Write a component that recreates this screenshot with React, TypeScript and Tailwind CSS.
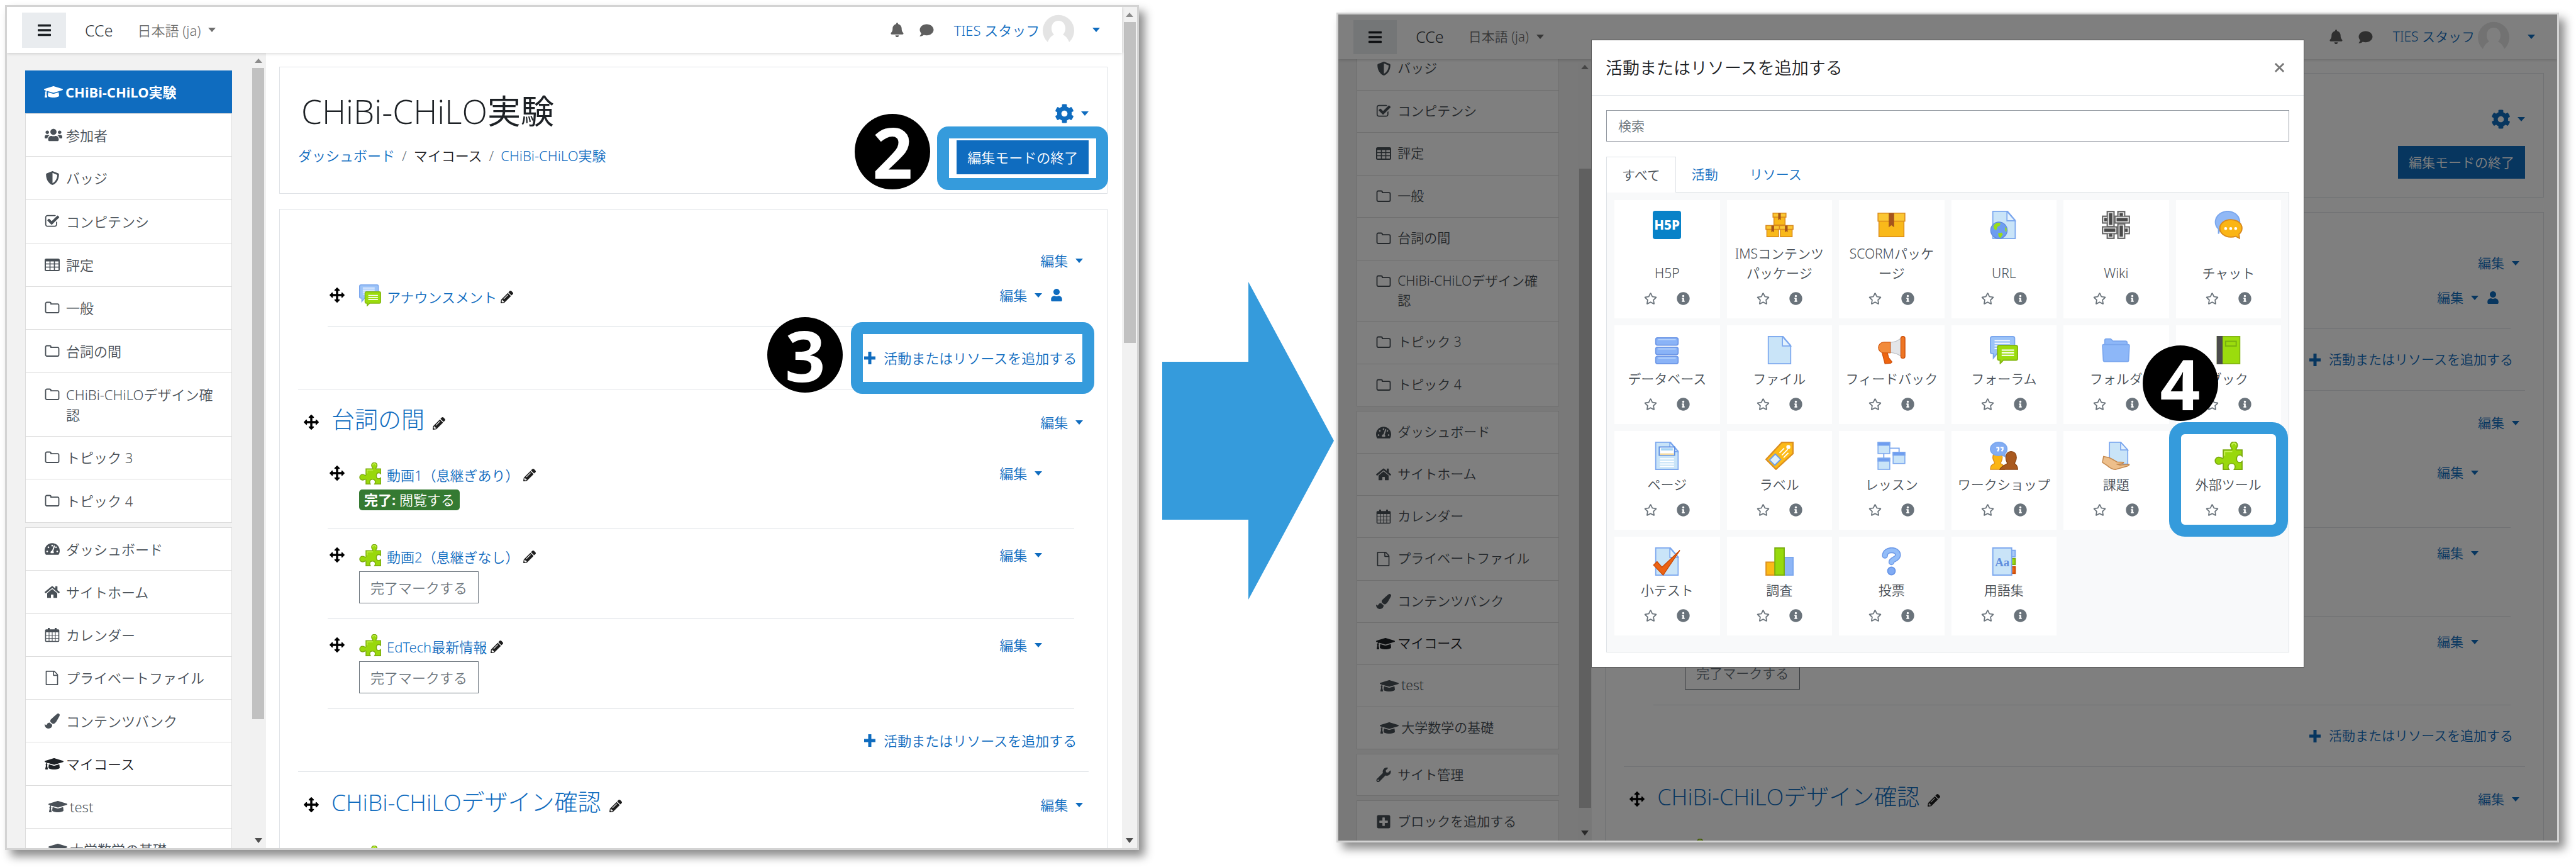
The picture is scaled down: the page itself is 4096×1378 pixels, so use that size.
import type { ReactNode } from "react";
import {
  FaBars,
  FaBell,
  FaCog,
  FaComment,
  FaGraduationCap,
  FaHome,
  FaInfoCircle,
  FaPaintBrush,
  FaPencilAlt,
  FaPlusSquare,
  FaRegStar,
  FaShieldAlt,
  FaTachometerAlt,
  FaUser,
  FaUsers,
  FaWrench,
} from "react-icons/fa";

/* ---------- size sets for the two browser windows ---------- */

const large = {
  text: "text-[22px] leading-8",
  header: "h-[73px]",
  menu: "h-14 w-[70px]",
  drawer: "w-[412px]",
  drawerPad: "pt-7",
  item: "w-[329px]",
  main: "pr-[23px]",
  headCard: "h-[202px] mb-6",
  headTop: "pt-[38px]",
  gearTop: "pt-[58px]",
  title: "text-[53px] leading-[64px]",
  button: "h-[54px]",
  firstHead: "h-[95px] pt-[68px]",
  sectionHead: "h-[92px] pt-[13px]",
  sectionTitle: "text-[37px]",
  activity: "pt-[25px]",
  below: "mt-[10px]",
  add: "h-[100px]",
};

const small: typeof large = {
  text: "text-[21px] leading-[31px]",
  header: "h-[71px]",
  menu: "h-[54px] w-[69px]",
  drawer: "w-[403px]",
  drawerPad: "-mt-[19px]",
  item: "w-[322px]",
  main: "pr-[21px]",
  headCard: "h-[198px] mb-[23px]",
  headTop: "pt-[37px]",
  gearTop: "pt-[57px]",
  title: "text-[52px] leading-[62px]",
  button: "h-[52px]",
  firstHead: "h-[95px] pt-[67px]",
  sectionHead: "h-[90px] pt-[12px]",
  sectionTitle: "text-[36px]",
  activity: "pt-[24px]",
  below: "mt-[9px]",
  add: "h-[98px]",
};

type Sizes = typeof large;

/* ---------- small glyphs ---------- */

const Caret = () => (
  <span className="inline-block h-0 w-0 border-x-[6px] border-t-[7px] border-x-transparent border-t-current" />
);

const CheckIcon = () => (
  <svg viewBox="0 0 1792 1792" className="h-6 w-6" fill="currentColor">
    <path d="M1472 930v318q0 119-84.5 203.5t-203.5 84.5h-832q-119 0-203.5-84.5t-84.5-203.5v-832q0-119 84.5-203.5t203.5-84.5h832q63 0 117 25 15 7 18 23 3 17-9 29l-49 49q-10 10-23 10-3 0-9-2-23-6-45-6h-832q-66 0-113 47t-47 113v832q0 66 47 113t113 47h832q66 0 113-47t47-113v-254q0-13 9-22l64-64q10-10 23-10 6 0 12 3 20 8 20 29zm231-489l-814 814q-24 24-57 24t-57-24l-430-430q-24-24-24-57t24-57l110-110q24-24 57-24t57 24l263 263 647-647q24-24 57-24t57 24l110 110q24 24 24 57t-24 57z" />
  </svg>
);

const TableIcon = () => (
  <svg viewBox="0 0 24 20" className="h-5 w-6" fill="none" stroke="currentColor">
    <rect x="1" y="1" width="22" height="18" rx="1.5" strokeWidth="2" />
    <path d="M1 3h22" strokeWidth="3" />
    <path d="M1 8.5h22M1 13.5h22M8.5 3v16M15.5 3v16" strokeWidth="1.6" />
  </svg>
);

const FolderIcon = () => (
  <svg viewBox="0 0 24 20" className="h-5 w-6" fill="none" stroke="currentColor" strokeWidth="1.8">
    <path d="M1.5 3.5a2 2 0 0 1 2-2H8a2 2 0 0 1 2 2v.7h10.500a2 2 0 0 1 2 2V16a2 2 0 0 1-2 2h-17a2 2 0 0 1-2-2z" />
  </svg>
);

const FileIcon = () => (
  <svg viewBox="0 0 1792 1792" className="h-[23px] w-[23px]" fill="currentColor">
    <path d="M1596 380q28 28 48 76t20 88v1152q0 40-28 68t-68 28h-1344q-40 0-68-28t-28-68v-1600q0-40 28-68t68-28h896q40 0 88 20t76 48zm-444-244v376h376q-10-29-22-41l-313-313q-12-12-41-22zm384 1528v-1024h-416q-40 0-68-28t-28-68v-416h-768v1536h1280z" />
  </svg>
);

const CalendarIcon = () => (
  <svg viewBox="0 0 24 24" className="h-6 w-6" fill="none" stroke="currentColor">
    <rect x="1.500" y="4" width="21" height="18.500" rx="1" strokeWidth="1.600" />
    <path d="M1.500 6h21" strokeWidth="4" />
    <path d="M6.500 1v5M17.500 1v5" strokeWidth="3" />
    <path d="M2 12.500h20M2 17.500h20M7 8v14M12 8v14M17 8v14" strokeWidth="1.100" />
  </svg>
);

const ArrowsIcon = () => (
  <svg viewBox="0 0 1792 1792" className="h-6 w-6" fill="currentColor">
    <path d="M1792 896q0 26-19 45l-256 256q-19 19-45 19t-45-19-19-45v-128h-384v384h128q26 0 45 19t19 45-19 45l-256 256q-19 19-45 19t-45-19l-256-256q-19-19-19-45t19-45 45-19h128v-384h-384v128q0 26-19 45t-45 19-45-19l-256-256q-19-19-19-45t19-45l256-256q19-19 45-19t45 19 19 45v128h384v-384h-128q-26 0-45-19t-19-45 19-45l256-256q19-19 45-19t45 19l256 256q19 19 19 45t-19 45-45 19h-128v384h384v-128q0-26 19-45t45-19 45 19l256 256q19 19 19 45z" />
  </svg>
);

const PlusIcon = () => (
  <svg viewBox="0 0 18 20" className="h-5 w-[18px]" stroke="currentColor" strokeWidth="5">
    <path d="M9 0v20M0 10h18" />
  </svg>
);

/* ---------- coloured activity icons, all on a 24 unit grid ---------- */

const blue = "#7ba7ee";

const Sheet = ({ x = 2.5 }: { x?: number }) => (
  <g stroke={blue} strokeWidth="0.9">
    <path d={`M${x} .5h12.500l6.500 7.500v15.500h-19z`} fill="#c9e4f8" />
    <path d={`M${x + 12} .5v8h7z`} fill="#e4f2fd" />
  </g>
);

const Box = ({ x, y, w, h }: { x: number; y: number; w: number; h: number }) => (
  <g stroke="#d98a1c" strokeWidth="0.8">
    <rect x={x + 0.8} y={y + 1} width={w - 1.6} height={h - 1} fill="#f9b91a" />
    <rect x={x} y={y} width={w} height={h * 0.34} fill="#fbc733" />
    <path
      d={`M${x + w * 0.4} ${y}h${w * 0.2}v${h * 0.6}l-${w * 0.1}-${h * 0.09}l-${w * 0.1} ${h * 0.09}z`}
      fill="#a5551d"
      stroke="none"
    />
  </g>
);

const Puzzle = () => (
  <g>
    <path
      d="M7.500 7h6.700c.7 0 1-.6.5-1.300C14 4.700 13.600 3.900 13.600 3a3 2.800 0 0 1 6 0c0 .9-.3 1.700-1 2.700-.5.700-.2 1.300.5 1.300h4.400v5.200c-.6-.6-1.300-.9-2-.9-1.600 0-2.700 1.400-2.700 3.200s1.100 3.200 2.700 3.200c.7 0 1.400-.3 2-.9v6.700h-6.600c.5-.7.700-1.400.7-2.200 0-1.700-1.300-2.900-3-2.900s-3 1.200-3 2.900c0 .8.200 1.500.7 2.200H7.500v-4.600c0-.7-.6-.9-1.300-.5-.8.500-1.600.8-2.500.8a3 3 0 0 1 0-6.100c.9 0 1.700.3 2.500.8.7.4 1.300.2 1.300-.5z"
      fill="#99d80c"
      stroke="#79a80d"
      strokeWidth="0.9"
    />
    <path d="M8.700 12V8.300h6.500M14.900 3a1.700 1.700 0 0 1 3.400 0" fill="none" stroke="#c8f257" strokeWidth="0.9" />
  </g>
);

const Forum = () => (
  <g>
    <path d="M2 .5h17.500a1.500 1.500 0 0 1 1.500 1.500v12.500H6.500L3 18.700V15H2A1.500 1.500 0 0 1 .5 13.500V2A1.500 1.500 0 0 1 2 .5z" fill="#9cc3f8" stroke={blue} />
    <path d="M4 4h13M4 6.200h13M4 8.400h13M4 10.600h3" stroke="#fff" strokeWidth="0.9" />
    <path d="M8 8h14a1.500 1.500 0 0 1 1.500 1.500v9.500a1.500 1.500 0 0 1-1.500 1.500H11.500L8.800 23.300V20.500H8A1.500 1.500 0 0 1 6.500 19V9.500A1.500 1.500 0 0 1 8 8z" fill="#9bdc0d" stroke="#85b814" />
    <path d="M10 12h10.500M10 14.200h10.500M10 16.400h10.500" stroke="#fff" strokeWidth="1.100" />
  </g>
);

const Pane = ({ x, y }: { x: number; y: number }) => (
  <g stroke={blue} strokeWidth="0.8">
    <rect x={x} y={y} width="10" height="9.500" fill="#c9e4f8" />
    <rect x={x} y={y} width="10" height="2.500" fill="#6e9df0" />
  </g>
);

const drawings: Record<string, ReactNode> = {
  H5P: (
    <g>
      <rect width="24" height="24" rx="2" fill="#0882c8" />
      <text x="12" y="16" textAnchor="middle" fontSize="11" fontWeight="800" fill="#fff">
        H5P
      </text>
    </g>
  ),
  IMS: (
    <g>
      <Box x={6.5} y={2} w={11} h={10} />
      <Box x={0.5} y={12.5} w={11.5} h={9.5} />
      <Box x={12} y={12.5} w={11.5} h={9.5} />
    </g>
  ),
  SCORM: <Box x={0.6} y={2} w={22.8} h={20} />,
  URL: (
    <g>
      <Sheet />
      <circle cx="7.700" cy="16.500" r="7" fill="#6d9df0" stroke="#5f89dc" strokeWidth="0.7" />
      <path d="M3 13c1-2.500 4-3.500 6-2.500l-.5 2-2 1-1 3-2-1zM7 19l3-.5 1 1.500-2 3-1.500-1zM13 13.500l1.300 1.500-.3 3-1-1z" fill="#99dd17" />
    </g>
  ),
  Wiki: (
    <g fill="#4a4a4a" stroke="#6b6b6b" strokeWidth="0.9">
      <rect x="13.500" y=".5" width="6" height="8" />
      <rect x=".5" y="4.500" width="8" height="6" />
      <rect x="4.500" y="16" width="6" height="7.500" />
      <rect x="16" y="13.500" width="7.500" height="6" />
      <rect x="4.500" y=".5" width="6" height="13" />
      <rect x="11" y="4.500" width="12.500" height="6" />
      <rect x="13.500" y="11" width="6" height="12.500" />
      <rect x=".5" y="13.500" width="12.500" height="6" />
      <g fill="none" stroke="#e8e8e8" strokeWidth="0.9">
        <rect x="5.600" y="1.600" width="3.800" height="10.800" />
        <rect x="12.100" y="5.600" width="10.300" height="3.800" />
        <rect x="14.600" y="12.100" width="3.800" height="10.300" />
        <rect x="1.600" y="14.600" width="10.300" height="3.800" />
        <path d="M14.600 4.500V1.600h3.800v2.900M4.500 5.600H1.600v3.800h2.900M5.600 19.500v2.900h3.800v-2.900M19.500 14.600h2.900v3.800h-2.900" />
      </g>
    </g>
  ),
  Chat: (
    <g>
      <path d="M3.500 19.500v-4A10.300 9 0 1 1 11 18.500c-3 0-5-.7-6.500-2z" fill="#90b8f6" stroke={blue} />
      <path d="M14 7.500c5.200 0 9.400 3.200 9.400 7.300 0 2-.9 3.700-2.500 5l.4 3.500-3.200-1.600c-1.200.4-2.600.6-4.100.6-5.200 0-9.400-3.300-9.400-7.500S8.800 7.500 14 7.500z" fill="#fbb515" stroke="#d98a1c" />
      <path d="M9.500 15h.1M13.800 15h.1M18 15h.1" stroke="#fff" strokeWidth="2.400" strokeLinecap="round" />
    </g>
  ),
  Database: (
    <g fill="#8ab3f7" stroke="#6c96e6" strokeWidth="0.9">
      <rect x="2.500" y="1.500" width="19" height="6.300" rx="1.500" />
      <rect x="2.500" y="9.500" width="19" height="6.300" rx="1.500" />
      <rect x="2.500" y="17.200" width="19" height="6.300" rx="1.500" />
      <path d="M4.500 3h15M4.500 11h15M4.500 18.700h15" stroke="#b4d2fb" />
    </g>
  ),
  File: <Sheet />,
  Feedback: (
    <g>
      <path d="M11 5.500c4-.3 7-1.700 9.500-4v16c-2.500-2-5.500-3.200-9.500-3.500z" fill="#e3e5e8" stroke="#b9bdc2" strokeWidth="0.6" />
      <path d="M4 14h4.500l1.200 4.500L12.500 22l-1 1-5 .5z" fill="#ee6510" stroke="#cb4c07" strokeWidth="0.6" />
      <path d="M11 5.300H5.500a4.500 4.500 0 0 0 0 9H11z" fill="#f28b3b" stroke="#d45a10" strokeWidth="0.7" />
      <rect x="20" y=".4" width="3.500" height="18.500" rx="1.700" fill="#ee7523" stroke="#cb4c07" strokeWidth="0.7" />
    </g>
  ),
  Forum: <Forum />,
  Folder: (
    <g fill="#8db7f8" stroke={blue} strokeWidth="0.9">
      <path d="M2.500 8V3.500a1 1 0 0 1 1-1h4l2 1.800H20a1.500 1.500 0 0 1 1.500 1.500V8z" />
      <path d="M.6 8.500Q.5 7.300 1.500 7.300h21q1 0 .9 1.200l-.7 12.200a1 1 0 0 1-1 1H2.300a1 1 0 0 1-1-1z" />
    </g>
  ),
  Book: (
    <g>
      <rect x="2.500" y=".5" width="19" height="23" fill="#9bdc0d" stroke="#85b814" />
      <rect x="2" y="0" width="5" height="24" fill="#4c4c4c" />
      <rect x="9.500" y="4.500" width="9" height="4" fill="none" stroke="#78b00e" />
    </g>
  ),
  Page: (
    <g>
      <Sheet />
      <rect x="5.500" y="4.500" width="13" height="7" fill="#fff" stroke="#5c8fe4" />
      <path d="M6 10.600h12" stroke="#f3d9a0" strokeWidth="1.400" />
      <path d="M7 6.500h10" stroke="#a6d4f5" strokeWidth="2" />
      <path d="M6 14.500h12M6 16.700h12M6 18.900h12M6 21h12" stroke="#fff" strokeWidth="1" />
    </g>
  ),
  Label: (
    <g>
      <path d="M14 .6h9.400v9.600L9 23.400.6 15z" fill="#fcba17" stroke="#dc8f1f" strokeWidth="1.200" />
      <circle cx="19.500" cy="4.500" r="1.700" fill="#fff" />
      <path d="M12 9.500l4-4M14 11.500l5-5M15.500 13.500l4-4" stroke="#fff" strokeWidth="0.9" />
      <path d="M8.500 10.500l4.500 4.500-5 5-4.500-4.500z" fill="#dff0fc" stroke="#6a9bea" />
    </g>
  ),
  Lesson: (
    <g>
      <path d="M5.500 8v8M10 5.500h8.500v5" stroke={blue} fill="none" />
      <Pane x={0.6} y={0.6} />
      <Pane x={0.6} y={14} />
      <Pane x={13.4} y={9} />
    </g>
  ),
  Workshop: (
    <g>
      <path d="M.5 23.500c0-3 1-4 3.500-5 .5-1-1.500-2.500-1.500-5 0-3 1.500-5 4-5s4 2 4 5-1.500 4-1.500 5c2 1 3.500 2 3.500 5z" fill="#fbb515" stroke="#d98a1c" strokeWidth="0.7" />
      <path d="M8.500 23.500c1-2.500 3.500-3.500 6.500-5-.5-1-1.500-2.500-1.500-5 0-3.200 1.800-5.200 4.500-5.200s4.500 2 4.500 5.200c0 2.500-1.500 4-1.500 5 1.500 1 2.600 2 2.600 5z" fill="#a9591f" stroke="#8a4312" strokeWidth="0.7" />
      <path d="M7.500.5c4 0 7 2.500 7 5.700 0 1.500-.7 3-1.900 4l.2 2.300-2.600-1.200c-.8.200-1.700.4-2.700.4-4 0-7-2.400-7-5.500s3-5.700 7-5.700z" fill="#83adf4" stroke={blue} />
      <path d="M5.500 5h2v1.500l-1 1.700M9 5h2v1.500l-1 1.700" stroke="#fff" fill="none" strokeWidth="1.200" />
    </g>
  ),
  Assignment: (
    <g>
      <path d="M6.500.5h9.500l6 6.500v12H6.500z" fill="#c9e4f8" stroke={blue} strokeWidth="0.9" />
      <path d="M16 .5V7h6z" fill="#e4f2fd" stroke={blue} strokeWidth="0.9" />
      <path d="M1.500 12.500L6 13.500c2.500.8 4.500 2.500 7 3.700l5.500.3c0 1.200-3 1.700-6 1.500l3 .8 7.500-.6c1 .4-1 1.500-3 2l-8.500 2.400c-3-.2-5-1.600-7-3.400L.5 17.500z" fill="#edbf8b" stroke="#c58a50" strokeWidth="0.8" />
    </g>
  ),
  Puzzle: <Puzzle />,
  Quiz: (
    <g>
      <Sheet />
      <path d="M.6 15l3-3 4.200 4.800L23 2.500 8.800 23.500z" fill="#ec6314" stroke="#c94a06" strokeWidth="0.7" />
    </g>
  ),
  Survey: (
    <g>
      <rect x=".6" y="12.500" width="7.500" height="11" fill="#fcba17" stroke="#dc8f1f" />
      <rect x="16" y="8.500" width="7.500" height="15" fill="#8db5f6" stroke={blue} />
      <rect x="8.100" y=".5" width="7.900" height="23" fill="#97da0c" stroke="#79ad0e" />
    </g>
  ),
  Choice: (
    <g fill="none" strokeLinecap="round">
      <path d="M6.500 7C6.500 1 17.500 1 17.500 6.500c0 3.500-5.500 3.500-5.500 6" stroke="#6b98e8" strokeWidth="5" />
      <path d="M6.500 7C6.500 1 17.500 1 17.500 6.500c0 3.500-5.500 3.500-5.500 6" stroke="#93bdf8" strokeWidth="3.400" />
      <circle cx="12" cy="20" r="3.200" fill="#80abf4" stroke="#6b98e8" />
    </g>
  ),
  Glossary: (
    <g>
      <rect x="17" y="2.500" width="4.500" height="5.500" fill="#a9c9f8" stroke={blue} />
      <rect x="17" y="9.500" width="4.500" height="5" fill="#9bdc0d" stroke="#79ad0e" />
      <rect x="17" y="16.500" width="4.500" height="5.500" fill="#ec6314" stroke="#c94a06" />
      <rect x="2.500" y=".5" width="16" height="23" fill="#c9e4f8" stroke={blue} />
      <text x="10.500" y="16" textAnchor="middle" fontSize="10" fontWeight="700" fill="#5f8ddd" className="font-['Liberation_Serif',serif]">
        Aa
      </text>
    </g>
  ),
};

const ModIcon = ({ name, className }: { name: string; className: string }) => (
  <svg viewBox="0 0 24 24" className={className} aria-hidden="true">
    {drawings[name]}
  </svg>
);

/* ---------- annotation marks ---------- */

const Step = ({ n, className }: { n: number; className: string }) => (
  <span
    className={`absolute z-20 flex h-[120px] w-[120px] items-center justify-center rounded-full bg-black text-[112px] leading-none font-bold text-white ${className}`}
  >
    {n}
  </span>
);

const Frame = ({ className }: { className: string }) => (
  <span className={`pointer-events-none absolute z-10 border-[19px] border-[#359bdc] ${className}`} />
);

/* ---------- browser furniture ---------- */

function ScrollBar({ className, before, thumb, after }: { className: string; before: number; thumb: number; after: number }) {
  return (
    <div className={`flex shrink-0 flex-col items-center bg-[#f1f1f1] ${className}`}>
      <div className="flex h-6 shrink-0 items-center">
        <span className="border-x-[6px] border-b-[7px] border-x-transparent border-b-[#8c8c8c]" />
      </div>
      <div style={{ flexGrow: before }} />
      <div className="w-[19px] bg-[#c1c1c1]" style={{ flexGrow: thumb }} />
      <div style={{ flexGrow: after }} />
      <div className="flex h-6 shrink-0 items-center">
        <span className="border-x-[6px] border-t-[8px] border-x-transparent border-t-[#505050]" />
      </div>
    </div>
  );
}

function TopBar({ s }: { s: Sizes }) {
  return (
    <header className={`relative z-10 flex shrink-0 items-center bg-white pr-[35px] pl-6 shadow-[0_1px_5px_rgba(0,0,0,0.18)] ${s.header}`}>
      <button aria-label="メニュー" className={`flex items-center justify-center bg-[#e9ecef] text-[#1d2125] ${s.menu}`}>
        <FaBars className="h-6 w-[21px]" />
      </button>
      <a href="#home" className="ml-[30px] text-[25px] text-[#343a40]">
        CCe
      </a>
      <button className="ml-[39px] flex items-center gap-3 text-[#6f6f6f]">
        日本語 (ja) <Caret />
      </button>
      <div className="flex-1" />
      <button aria-label="通知" className="text-[#5f5f5f]">
        <FaBell className="h-[23px] w-[21px]" />
      </button>
      <button aria-label="メッセージ" className="ml-[25px] text-[#5f5f5f]">
        <FaComment className="h-[22px] w-[23px]" />
      </button>
      <button className="ml-8 flex items-center text-[#0f6cbf]">
        TIES スタッフ
        <svg viewBox="0 0 50 50" className="ml-[5px] h-[50px] w-[50px]">
          <path d="M8 44A25 25 0 1 1 42 44C40 38 36 34 32 32C39 26 37 10 25 10S11 26 18 32C14 34 10 38 8 44z" fill="#e4e4e4" />
        </svg>
        <span className="ml-[29px] flex">
          <Caret />
        </span>
      </button>
    </header>
  );
}

/* ---------- side navigation ---------- */

type NavItem = { icon: ReactNode; label: string; active?: boolean; strong?: boolean; nested?: boolean };

const cap = <FaGraduationCap className="h-6 w-[30px]" />;

const courseItems: NavItem[] = [
  { icon: cap, label: "CHiBi-CHiLO実験", active: true },
  { icon: <FaUsers className="h-[23px] w-7" />, label: "参加者" },
  { icon: <FaShieldAlt className="h-[22px] w-[25px]" />, label: "バッジ" },
  { icon: <CheckIcon />, label: "コンピテンシ" },
  { icon: <TableIcon />, label: "評定" },
  { icon: <FolderIcon />, label: "一般" },
  { icon: <FolderIcon />, label: "台詞の間" },
  { icon: <FolderIcon />, label: "CHiBi-CHiLOデザイン確認" },
  { icon: <FolderIcon />, label: "トピック 3" },
  { icon: <FolderIcon />, label: "トピック 4" },
];

const siteItems: NavItem[] = [
  { icon: <FaTachometerAlt className="h-[23px] w-6" />, label: "ダッシュボード" },
  { icon: <FaHome className="h-[22px] w-6" />, label: "サイトホーム" },
  { icon: <CalendarIcon />, label: "カレンダー" },
  { icon: <FileIcon />, label: "プライベートファイル" },
  { icon: <FaPaintBrush className="h-6 w-6" />, label: "コンテンツバンク" },
  { icon: cap, label: "マイコース", strong: true },
  { icon: cap, label: "test", nested: true },
  { icon: cap, label: "大学数学の基礎", nested: true },
];

function NavGroup({ items, s, className }: { items: NavItem[]; s: Sizes; className: string }) {
  return (
    <ul className={`mb-[7px] flex shrink-0 flex-col ${s.item} ${className}`}>
      {items.map((item) => (
        <li
          key={item.label}
          className={
            item.active
              ? "flex flex-auto items-center bg-[#0f6cbf] font-bold text-white"
              : item.strong
                ? "flex flex-auto items-center border border-b-0 border-[#dcdcdc] bg-white text-[#1d2125] last:border-b"
                : "flex flex-auto items-center border border-b-0 border-[#dcdcdc] bg-white text-[#495057] last:border-b"
          }
        >
          <a href="#nav" className={`flex w-full items-start py-4 pr-6 ${item.nested ? "pl-9" : "pl-[30px]"}`}>
            <span className="flex h-8 w-[34px] shrink-0 items-center">{item.icon}</span>
            <span className="break-all">{item.label}</span>
          </a>
        </li>
      ))}
    </ul>
  );
}

/* ---------- course page ---------- */

const EditMenu = () => (
  <button className="flex items-center gap-3 text-[#0f6cbf]">
    編集 <Caret />
  </button>
);

const MoveHandle = () => (
  <button aria-label="移動" className="flex h-8 w-6 shrink-0 items-center text-black">
    <ArrowsIcon />
  </button>
);

const Pencil = () => (
  <button aria-label="タイトルを編集" className="text-[#1d1d1d]">
    <FaPencilAlt className="h-5 w-5" />
  </button>
);

function SectionHead({ s, title, first, covered }: { s: Sizes; title?: string; first?: boolean; covered?: boolean }) {
  return (
    <div className={`px-[9px] ${first ? s.firstHead : s.sectionHead}`}>
      <div className={`flex items-center justify-between ${first ? "h-[26px]" : "h-[78px]"}`}>
        {title && !covered ? (
          <div className="flex items-center">
            <MoveHandle />
            <h2 className={`mb-2 ml-5 font-['Open_Sans','Noto_Sans_CJK_JP',sans-serif] font-light ${s.sectionTitle}`}>
              <a href="#section" className="text-[#0f6cbf]">
                {title}
              </a>
            </h2>
            <span className="mt-1 ml-[13px] flex">
              <Pencil />
            </span>
          </div>
        ) : (
          <span />
        )}
        <EditMenu />
      </div>
    </div>
  );
}

type ActivityProps = {
  s: Sizes;
  icon: string;
  name: string;
  user?: boolean;
  covered?: boolean;
  end: string;
  children?: ReactNode;
};

/* A covered activity keeps its row and menu; its name lies behind the dialog. */
function Activity({ s, icon, name, user, covered, end, children }: ActivityProps) {
  return (
    <li className={`mr-[23px] ml-[47px] border-b border-[#dee2e6] pl-[3px] ${s.activity} ${end}`}>
      <div className="flex h-8 items-center">
        {!covered && (
          <>
            <MoveHandle />
            <ModIcon name={icon} className="ml-[23px] h-[35px] w-[35px] shrink-0" />
            <a href="#activity" className="mt-[6px] ml-[9px] text-[#0f6cbf]">
              {name}
            </a>
            <span className="mt-[6px] ml-[6px] flex">
              <Pencil />
            </span>
          </>
        )}
        <div className="flex-1" />
        <EditMenu />
        <span className="w-[51px] pl-[14px] text-[#0f6cbf]">{user && <FaUser className="h-5 w-[18px]" />}</span>
      </div>
      <div className={`ml-[47px] flex ${children ? s.below : ""}`}>{children}</div>
    </li>
  );
}

const MarkDone = ({ covered }: { covered?: boolean }) => (
  <button className="h-[51px] border border-[#6a737b] bg-white px-[17px] text-[#6a737b]">{!covered && "完了マークする"}</button>
);

function AddLink({ s, mark }: { s: Sizes; mark?: boolean }) {
  return (
    <div className={`relative flex items-center justify-end border-b border-[#dee2e6] pr-[19px] ${s.add}`}>
      <button className="flex items-center gap-[13px] text-[#0f6cbf]">
        <PlusIcon />
        活動またはリソースを追加する
      </button>
      {mark && (
        <>
          <Step n={3} className="-top-[15px] right-[391px]" />
          <Frame className="-top-[7px] -right-[9px] h-[114px] w-[387px] rounded-[18px]" />
        </>
      )}
    </div>
  );
}

function CoursePage({ s, marks, covered }: { s: Sizes; marks?: boolean; covered?: boolean }) {
  return (
    <main className={`min-w-0 flex-1 bg-white pt-[22px] pl-[21px] ${s.main}`}>
      <section className={`flex justify-between border border-[#dee2e6] px-[29px] ${s.headCard}`}>
        <div className={s.headTop}>
          {!covered && (
            <>
              <h1 className={`ml-[5px] font-['Open_Sans','Noto_Sans_CJK_JP',sans-serif] font-light text-[#1d2125] ${s.title}`}>
                CHiBi-CHiLO<span className="font-normal">実験</span>
              </h1>
              <nav className="mt-[22px] flex gap-[11px] text-[#6a737b]">
                <a href="#dashboard" className="text-[#0f6cbf]">
                  ダッシュボード
                </a>
                /<span className="text-[#1d2125]">マイコース</span>/
                <a href="#course" className="text-[#0f6cbf]">
                  CHiBi-CHiLO実験
                </a>
              </nav>
            </>
          )}
        </div>
        <div className={`flex flex-col items-end ${s.gearTop}`}>
          <button aria-label="設定" className="flex h-[30px] items-center gap-[11px] text-[#0f6cbf]">
            <FaCog className="h-[31px] w-[31px]" /> <Caret />
          </button>
          <div className="relative mt-7 flex">
            <button className={`bg-[#0f6cbf] px-[17px] text-white ${s.button}`}>編集モードの終了</button>
            {marks && (
              <>
                <Step n={2} className="-top-[42px] right-[252px]" />
                <Frame className="-inset-x-[31px] -top-[22px] -bottom-[25px] rounded-[18px]" />
              </>
            )}
          </div>
        </div>
      </section>
      <section className="h-[1200px] border border-[#dee2e6] px-[29px]">
        <SectionHead s={s} first />
        <ul>
          <Activity s={s} icon="Forum" name="アナウンスメント" user covered={covered} end="pb-[33px]" />
        </ul>
        <AddLink s={s} mark={marks} />
        <SectionHead s={s} title="台詞の間" covered={covered} />
        <ul>
          <Activity s={s} icon="Puzzle" name="動画1（息継ぎあり）" covered={covered} end="pb-[29px]">
            <span className="h-[33px] rounded-[5px] bg-[#357a32] px-2 text-white">
              {!covered && (
                <>
                  <b>完了:</b> 閲覧する
                </>
              )}
            </span>
          </Activity>
          <Activity s={s} icon="Puzzle" name="動画2（息継ぎなし）" covered={covered} end="pb-6">
            <MarkDone covered={covered} />
          </Activity>
          <Activity s={s} icon="Puzzle" name="EdTech最新情報" covered={covered} end="pb-6">
            <MarkDone />
          </Activity>
        </ul>
        <AddLink s={s} />
        <SectionHead s={s} title="CHiBi-CHiLOデザイン確認" />
        <div className={`ml-[97px] ${s.activity}`}>
          <ModIcon name="Puzzle" className="h-[35px] w-[35px]" />
        </div>
      </section>
    </main>
  );
}

/* ---------- activity chooser ---------- */

const choices: [string, string][] = [
  ["H5P", "H5P"],
  ["IMS", "IMSコンテンツパッケージ"],
  ["SCORM", "SCORMパッケージ"],
  ["URL", "URL"],
  ["Wiki", "Wiki"],
  ["Chat", "チャット"],
  ["Database", "データベース"],
  ["File", "ファイル"],
  ["Feedback", "フィードバック"],
  ["Forum", "フォーラム"],
  ["Folder", "フォルダ"],
  ["Book", "ブック"],
  ["Page", "ページ"],
  ["Label", "ラベル"],
  ["Lesson", "レッスン"],
  ["Workshop", "ワークショップ"],
  ["Assignment", "課題"],
  ["Puzzle", "外部ツール"],
  ["Quiz", "小テスト"],
  ["Survey", "調査"],
  ["Choice", "投票"],
  ["Glossary", "用語集"],
];

function Chooser() {
  return (
    <div role="dialog" aria-label="活動またはリソースを追加する" className="absolute top-10 left-1/2 w-[1134px] -translate-x-1/2 border border-[#555] bg-white">
      <div className="flex h-[88px] items-center justify-between border-b border-[#dee2e6] pr-[30px] pl-[22px]">
        <h2 className="text-[27px] text-[#1d2125]">活動またはリソースを追加する</h2>
        <button aria-label="閉じる" className="text-[#777]">
          <svg viewBox="0 0 18 18" className="h-[17px] w-[17px]" stroke="currentColor" strokeWidth="3">
            <path d="M2 2l14 14M16 2L2 16" />
          </svg>
        </button>
      </div>
      <div className="px-[23px] pt-[23px] pb-[23px]">
        <input
          type="text"
          aria-label="検索"
          placeholder="検索"
          className="block h-[50px] w-full border border-[#8f959e] px-[18px] placeholder:text-[#6a737b]"
        />
        <div role="tablist" className="relative mt-6 -mb-px flex">
          <button role="tab" aria-selected="true" className="h-[57px] border border-b-0 border-[#dee2e6] bg-white px-6 text-[#495057]">
            すべて
          </button>
          <button role="tab" aria-selected="false" className="px-[25px] text-[#0f6cbf]">
            活動
          </button>
          <button role="tab" aria-selected="false" className="px-[25px] text-[#0f6cbf]">
            リソース
          </button>
        </div>
        <div className="border border-[#dee2e6] bg-[#f8f9fa] px-3 pt-3 pb-[26px]">
          <div className="grid grid-cols-6 gap-[11px]">
            {choices.map(([icon, label]) => (
              <div key={icon} className="relative flex flex-col items-center bg-white px-[9px] pt-[17px] pb-[21px]">
                <ModIcon name={icon} className="h-[45px] w-[45px]" />
                <a href="#choice" className="mt-auto pt-2 text-center break-all text-[#495057]">
                  {label}
                </a>
                <div className="mt-[14px] flex gap-[31px] text-[#6a737b]">
                  <button aria-label={`${label} お気に入り`}>
                    <FaRegStar className="h-[21px] w-[21px]" />
                  </button>
                  <button aria-label={`${label} 情報`}>
                    <FaInfoCircle className="h-[21px] w-[21px]" />
                  </button>
                </div>
                {icon === "Puzzle" && (
                  <>
                    <Step n={4} className="-top-[136px] -left-[53px]" />
                    <Frame className="-inset-x-[11px] -top-[14px] -bottom-[11px] rounded-[25px]" />
                  </>
                )}
              </div>
            ))}
          </div>
        </div>
      </div>
    </div>
  );
}

/* ---------- page ---------- */

const shell = "relative flex min-w-0 overflow-hidden border-[3px] border-[#d3d3d3] bg-white shadow-[9px_10px_14px_rgba(0,0,0,0.45)]";

export default function App() {
  return (
    <div className="flex min-h-screen items-start bg-white pr-[27px] pl-2 font-['Noto_Sans','Noto_Sans_CJK_JP',sans-serif] font-[350]">
      <div className={`mt-2 h-[calc(100vh-35px)] flex-[1803] ${shell} ${large.text}`}>
        <div className="flex min-w-0 flex-1 flex-col">
          <TopBar s={large} />
          <div className="flex min-h-0 flex-1 overflow-hidden">
            <aside className={`flex shrink-0 bg-[#f2f2f2] ${large.drawer}`}>
              <nav className={`min-w-0 flex-1 overflow-hidden pl-[29px] ${large.drawerPad}`}>
                <NavGroup items={courseItems} s={large} className="h-[719px]" />
                <NavGroup items={siteItems} s={large} className="h-[547px]" />
              </nav>
              <ScrollBar className="w-[25px]" before={0} thumb={1035} after={181} />
            </aside>
            <CoursePage s={large} marks />
          </div>
        </div>
        <ScrollBar className="w-6" before={0} thumb={510} after={780} />
      </div>

      <svg viewBox="0 0 273 505" className="mt-[448px] mr-1 ml-[37px] w-[273px] shrink-0" role="img" aria-label="次へ">
        <path d="M0 127h137V0l136 252.500L137 505V378H0z" fill="#359bdc" />
      </svg>

      <div className={`mt-5 h-[calc(100vh-59px)] flex-[1944] ${shell} ${small.text}`}>
        <div className="flex min-w-0 flex-1 flex-col">
          <TopBar s={small} />
          <div className="flex min-h-0 flex-1 overflow-hidden">
            <aside className={`flex shrink-0 overflow-hidden bg-[#f2f2f2] ${small.drawer}`}>
              <nav className={`min-w-0 flex-1 pl-[29px] ${small.drawerPad}`}>
                <NavGroup items={courseItems.slice(2)} s={small} className="h-[571px]" />
                <NavGroup items={siteItems} s={small} className="h-[538px]" />
                <NavGroup items={[{ icon: <FaWrench className="h-[23px] w-6" />, label: "サイト管理" }]} s={small} className="h-[67px]" />
                <NavGroup items={[{ icon: <FaPlusSquare className="h-6 w-6" />, label: "ブロックを追加する" }]} s={small} className="h-[67px]" />
              </nav>
              <ScrollBar className="w-[22px]" before={150} thumb={1017} after={28} />
            </aside>
            <CoursePage s={small} covered />
          </div>
        </div>
        <div className="absolute inset-0 z-10 bg-black/50" />
        <div className="absolute inset-0 z-20">
          <Chooser />
        </div>
      </div>
    </div>
  );
}
